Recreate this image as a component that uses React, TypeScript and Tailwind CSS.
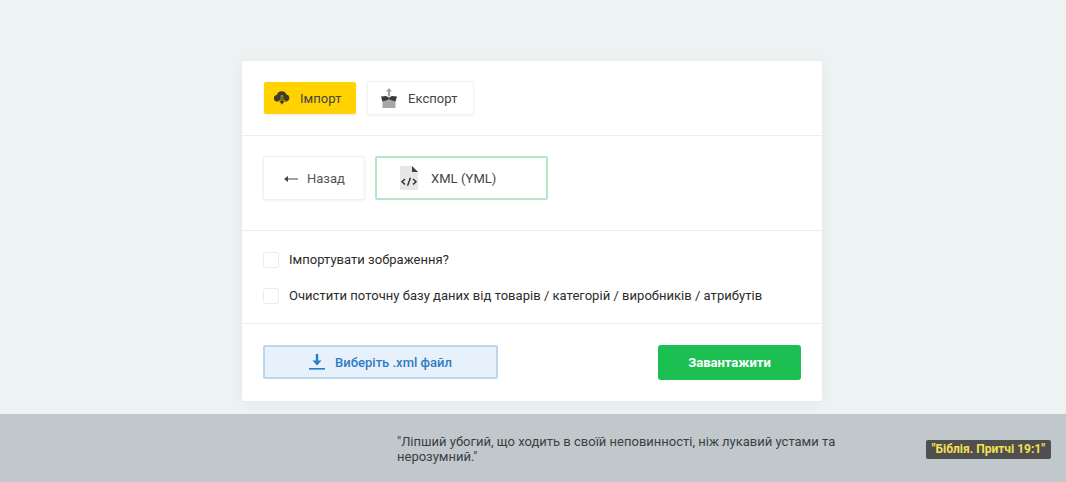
const roboto = "font-['Roboto',sans-serif]";

function ImportIcon() {
  return (
    <svg width="16" height="16" viewBox="0 0 16 16" className="shrink-0">
      <path
        d="M3.2 11.6A3.3 3.3 0 0 1 2.9 5 5 5 0 0 1 12.4 4.6 3.6 3.6 0 0 1 12.8 11.6Z"
        fill="#3d3a2a"
      />
      <path d="M7.1 5.6h1.8v5h2.4L8 15 4.7 10.6h2.4Z" fill="#3d3a2a" stroke="#ffd200" strokeWidth="0.6" />
    </svg>
  );
}

function ExportIcon() {
  return (
    <svg width="16" height="20" viewBox="0 0 16 20" className="shrink-0">
      <path d="M8 0 11 3.4H9.1V8.5H6.9V3.4H5Z" fill="#a0a0a0" />
      <path d="M1.5 12h13V20H1.5Z" fill="#a8a8a8" />
      <path d="M0 8.6 5.2 8 8 9.8 10.8 8 16 8.6 14.5 13.4 8 11.4 1.5 13.4Z" fill="#3a3a3a" />
    </svg>
  );
}

function XmlFileIcon() {
  return (
    <svg width="18" height="24" viewBox="0 0 18 24" className="shrink-0">
      <path d="M0 0H12L18 6V24H0Z" fill="#e6e6e6" />
      <path d="M12 0 18 6H12Z" fill="#3f3f3f" />
      <path
        d="M5 13 2 15.8 5 18.6M13 13 16 15.8 13 18.6M10.4 11.8 7.6 19.8"
        fill="none"
        stroke="#2f2f2f"
        strokeWidth="1.4"
      />
    </svg>
  );
}

function Check({ label }: { label: string }) {
  return (
    <label className="flex items-center gap-[10px]">
      <span className="h-4 w-4 rounded-[3px] border border-[#e8ecee] bg-white" />
      <span className="pt-[1px] text-[13px] leading-4 font-[450] tracking-[0.03px] text-[#2b2b2b]">{label}</span>
    </label>
  );
}

export default function App() {
  return (
    <div className={`flex h-[482px] flex-col overflow-hidden bg-[#edf2f3] ${roboto}`}>
      <main className="flex h-[414px] shrink-0 justify-center pt-[61px] pr-[2px]">
        <div className="h-[340px] w-[580px] rounded-[2px] bg-white shadow-[0_2px_14px_rgba(0,0,0,0.05)]">
          <div className="flex h-[75px] items-start gap-[11px] border-b border-[#eceff1] pt-[20px] pl-[22px]">
            <button className="mt-[1px] flex h-[32px] w-[92px] items-center gap-[10px] rounded-[2px] bg-[#ffd200] pl-[10px] text-[13px] font-[450] tracking-[0.05px] text-[#444] shadow-[0_1px_3px_rgba(0,0,0,0.08)]">
              <ImportIcon />
              <span className="pt-[1px]">Імпорт</span>
            </button>
            <button className="flex h-[34px] w-[107px] items-center gap-[11px] rounded-[2px] border border-[#f0f2f3] bg-white pl-[13px] text-[13px] font-[450] tracking-[0.05px] text-[#444] shadow-[0_1px_3px_rgba(0,0,0,0.06)]">
              <ExportIcon />
              <span className="pt-[1px]">Експорт</span>
            </button>
          </div>

          <div className="flex h-[95px] items-start gap-[10px] border-b border-[#eceff1] pt-[20px] pl-[21px]">
            <button className="flex h-[44px] w-[102px] items-center gap-[9px] rounded-[2px] border border-[#eef0f2] bg-white pt-[2px] pl-[20px] text-[13px] text-[#555] shadow-[0_1px_3px_rgba(0,0,0,0.06)]">
              <svg width="14" height="8" viewBox="0 0 14 8" className="shrink-0">
                <path d="M0 4 4 1V3.4H14V4.6H4V7Z" fill="#444" />
              </svg>
              Назад
            </button>
            <button className="flex h-[44px] w-[173px] items-center gap-[13px] rounded-[2px] border-2 border-[#b6e6c8] bg-white pl-[23px] text-[13px] font-[450] tracking-[0.05px] text-[#444]">
              <XmlFileIcon />
              <span className="pt-[2px]">XML (YML)</span>
            </button>
          </div>

          <div className="flex h-[93px] flex-col gap-[19px] border-b border-[#eceff1] pt-[20px] pl-[21px]">
            <Check label="Імпортувати зображення?" />
            <Check label="Очистити поточну базу даних від товарів / категорій / виробників / атрибутів" />
          </div>

          <div className="flex items-start justify-between pt-[21px] pr-[21px] pl-[21px]">
            <button className="flex h-[34px] w-[235px] items-center justify-center gap-[10px] rounded-[2px] border-2 border-[#bcd6ee] bg-[#e6f1fb] text-[13px] font-medium text-[#2f7cc4]">
              <svg width="16" height="16" viewBox="0 0 16 16" className="shrink-0">
                <path d="M6.8 0h2.4v6.5h3.3L8 11.6 3.5 6.5h3.3Z" fill="#1f7fd1" />
                <rect x="0" y="14" width="16" height="1.6" fill="#1f7fd1" />
              </svg>
              <span className="pt-[2px]">Виберіть .xml файл</span>
            </button>
            <button className="h-[35px] w-[143px] rounded-[3px] bg-[#1cc052] text-[13px] font-bold text-white">
              Завантажити
            </button>
          </div>
        </div>
      </main>

      <footer className="flex flex-1 items-center bg-[#c0c8cb] pr-[15px] pl-[397px]">
        <p className="w-[470px] pt-[2px] text-[13px] leading-[15px] text-[#3a3f42]">
          "Ліпший убогий, що ходить в своїй неповинності, ніж лукавий устами та нерозумний."
        </p>
        <span className="mt-[3px] ml-auto rounded-[2px] bg-[#4f4f4f] px-[6px] py-[2px] text-[12px] leading-[15px] font-bold text-[#f5e04f]">
          "Біблія. Притчі 19:1"
        </span>
      </footer>
    </div>
  );
}
